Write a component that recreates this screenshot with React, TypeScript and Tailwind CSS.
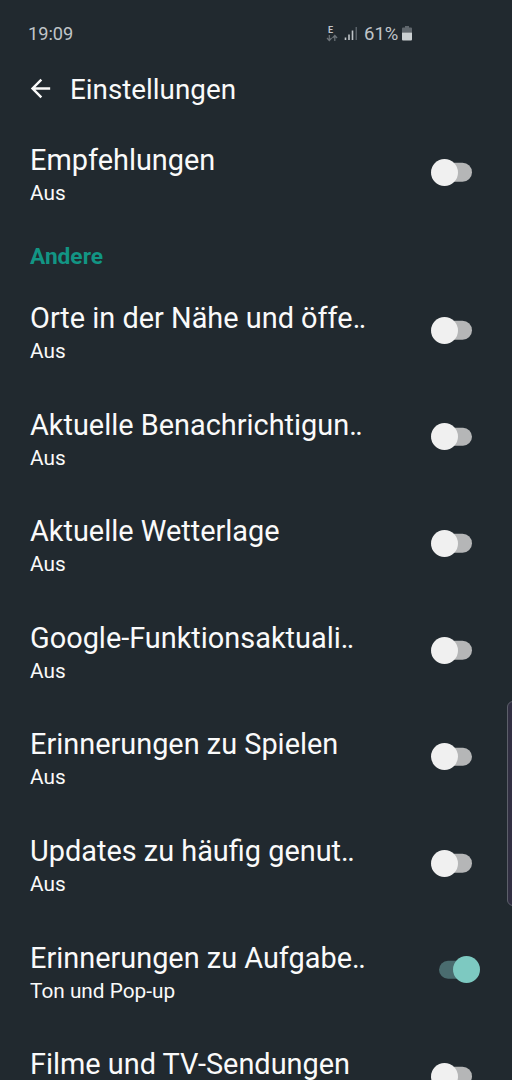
import { useState } from "react";
import { clsx } from "clsx";

interface Setting {
    title: string;
    status?: string;
    enabled: boolean;
    truncated?: boolean;
}

const recommendations: Setting = { title: "Empfehlungen", status: "Aus", enabled: false };

const otherSettings: Setting[] = [
    { title: "Orte in der Nähe und öffe", status: "Aus", enabled: false, truncated: true },
    { title: "Aktuelle Benachrichtigun", status: "Aus", enabled: false, truncated: true },
    { title: "Aktuelle Wetterlage", status: "Aus", enabled: false },
    { title: "Google-Funktionsaktuali", status: "Aus", enabled: false, truncated: true },
    { title: "Erinnerungen zu Spielen", status: "Aus", enabled: false },
    { title: "Updates zu häufig genut", status: "Aus", enabled: false, truncated: true },
    { title: "Erinnerungen zu Aufgabe", status: "Ton und Pop-up", enabled: true, truncated: true },
    { title: "Filme und TV-Sendungen", enabled: false },
];

function StatusBar() {
    return (
        <div className="flex h-[60px] shrink-0 items-center pl-7 pt-[7px] text-[#c0c5c9]">
            <span className="w-[298px] pt-px text-[18.2px] leading-none">19:09</span>
            <svg className="h-[18px] w-3 shrink-0" viewBox="0 0 12 18" fill="none">
                <text x="2" y="8" fontSize="9" fontWeight="700" fill="#c0c5c9">E</text>
                <path d="M3.3 10v5.5M1 13l2.3 2.5L5.6 13M8.8 16v-5.5M6.5 13l2.3-2.5L11.1 13" stroke="#6c7379" strokeWidth="1.2" />
            </svg>
            <svg className="ml-[6px] h-4 w-[14px] shrink-0" viewBox="0 0 14 16">
                <path d="M.7 11.500h1.6v2.500H.7zM4.2 8.500h1.6V14H4.2zM7.7 4.500h1.6V14H7.7z" fill="#c0c5c9" />
                <path d="M11.500 1H13v13h-1.500z" fill="#596168" />
            </svg>
            <span className="ml-[6px] w-[36px] pt-px text-[18.500px] leading-none">61%</span>
            <svg className="ml-[2px] h-4 w-[10px] shrink-0" viewBox="0 0 10 16">
                <path d="M3 0h4v1.500h2a1 1 0 0 1 1 1V6.500H0v-4a1 1 0 0 1 1-1h2z" fill="#60676d" />
                <path d="M0 6.500h10v7a1 1 0 0 1-1 1H1a1 1 0 0 1-1-1z" fill="#cbd0d2" />
            </svg>
        </div>
    );
}

function Toggle({ enabled, onToggle }: { enabled: boolean; onToggle: () => void }) {
    return (
        <button
            role="switch"
            aria-checked={enabled}
            onClick={onToggle}
            className={clsx("relative flex h-[27px] w-[49px] items-center", enabled ? "justify-end" : "justify-start")}
        >
            <span
                className={clsx(
                    "absolute left-2 top-1/2 h-[18.5px] w-[33px] -translate-y-1/2 rounded-full",
                    enabled ? "bg-[#4a6c6f]" : "bg-[#b5b6b7]"
                )}
            />
            <span className={clsx("relative size-[27px] rounded-full", enabled ? "bg-[#7dc9c1]" : "bg-[#f0f0f0]")} />
        </button>
    );
}

function SettingRow({ setting }: { setting: Setting }) {
    const [enabled, setEnabled] = useState(setting.enabled);

    return (
        <div className="flex h-[106.6px] shrink-0 items-center justify-between pl-[30px] pr-8">
            <div className="self-start whitespace-nowrap pt-[24px]">
                <p className="text-[28.9px] leading-[34px]">
                    {setting.title}
                    {setting.truncated && <span className="tracking-[-1.5px]">..</span>}
                </p>
                {setting.status && <p className="text-[20.8px] leading-[32px]">{setting.status}</p>}
            </div>
            <Toggle enabled={enabled} onToggle={() => setEnabled(!enabled)} />
        </div>
    );
}

export default function App() {
    return (
        <div className="relative flex h-[1080px] w-[512px] flex-col overflow-hidden bg-[#21292f] font-['Roboto',sans-serif] text-[#fafafa]">
            <StatusBar />

            <header className="flex h-[59px] shrink-0 items-center pl-[25.5px]">
                <button aria-label="Zurück" className="pb-[3px]">
                    <svg className="size-[29px]" viewBox="0 0 24 24" fill="currentColor">
                        <path d="M20 11H7.83l5.59-5.59L12 4l-8 8 8 8 1.41-1.41L7.83 13H20z" />
                    </svg>
                </button>
                <h1 className="ml-[15.5px] pt-px text-[27.8px] leading-8">Einstellungen</h1>
            </header>

            <SettingRow setting={recommendations} />
            <h2 className="flex h-[51.4px] shrink-0 items-center pl-[30px] pt-[12px] text-[22.7px] font-bold leading-none text-[#129584]">
                Andere
            </h2>
            {otherSettings.map((setting) => (
                <SettingRow key={setting.title} setting={setting} />
            ))}

            {/* Edge panel handle */}
            <div className="absolute -right-2 top-[701px] h-[205px] w-[13px] rounded-[6px] border border-[#5d606b] bg-[#312f42]" />
        </div>
    );
}
